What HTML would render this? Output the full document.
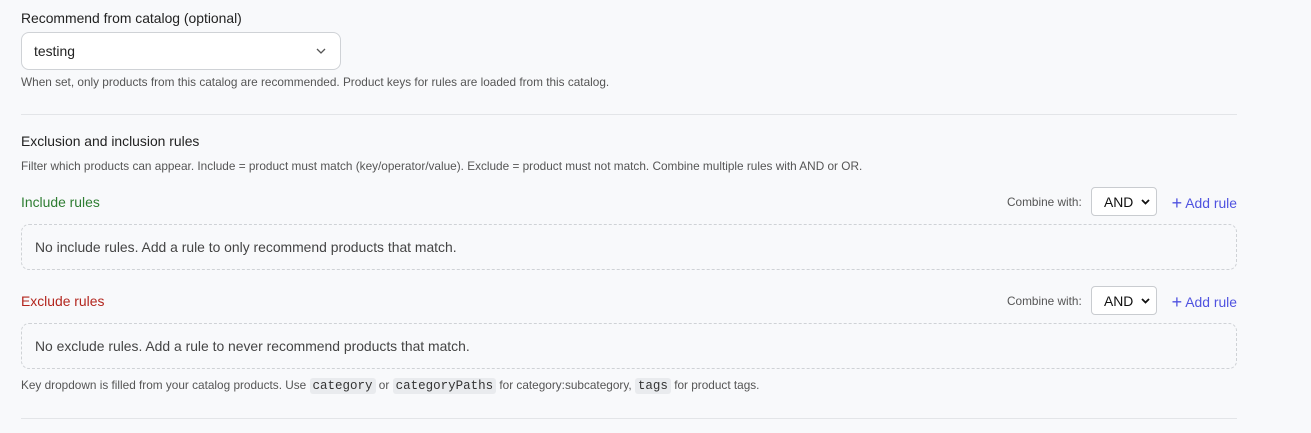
<!DOCTYPE html>
<html><head><style>
*{box-sizing:border-box;margin:0;padding:0}
body{width:1311px;height:433px;background:#f8f9fb;font-family:"Liberation Sans",sans-serif;color:#222;position:relative;overflow:hidden}
.a{position:absolute;white-space:nowrap}
.lbl{font-size:13.9px;color:#222}
.help{font-size:11.8px;color:#555}
.hr{position:absolute;left:21px;width:1216px;height:1px;background:#e3e5e8}
.box{position:absolute;left:21px;width:1216px;height:46px;border:1px dashed #cfd2d6;border-radius:8px;font-size:13.9px;color:#444;padding:14px 0 0 13px}
.sel{position:absolute;width:66px;height:29px;border:1px solid #c9ccd0;border-radius:4px;background:#fff;font-size:13.9px;color:#111;padding:6px 0 0 12px}
.sel svg{position:absolute;right:6px;top:11px}
.cw{font-size:11.8px;color:#555}
.add{font-size:13.9px;color:#4f52e0;right:74px}
code{font-family:"Liberation Mono",monospace;font-size:12.5px;background:#e9ebee;border-radius:3px;padding:1px 3px;color:#333}
</style></head><body>
<div class="a lbl" style="left:21px;top:10px">Recommend from catalog (optional)</div>
<div class="a" style="left:21px;top:32px;width:320px;height:38px;border:1px solid #cfd2d6;border-radius:8px;background:#fff;font-size:13.9px;padding:10px 0 0 12px">testing
<svg style="position:absolute;right:14px;top:15px" width="10" height="6" viewBox="0 0 10 6"><path d="M1 1l4 4 4-4" fill="none" stroke="#555" stroke-width="1.3"/></svg></div>
<div class="a help" style="left:21px;top:75px">When set, only products from this catalog are recommended. Product keys for rules are loaded from this catalog.</div>
<div class="hr" style="top:114px"></div>
<div class="a lbl" style="left:21px;top:133px">Exclusion and inclusion rules</div>
<div class="a help" style="left:21px;top:159px">Filter which products can appear. Include = product must match (key/operator/value). Exclude = product must not match. Combine multiple rules with AND or OR.</div>

<div class="a lbl" style="left:21px;top:194px;color:#2e7d32">Include rules</div>
<div class="a cw" style="left:1007px;top:195px">Combine with:</div>
<div class="sel" style="left:1091px;top:187px">AND<svg width="9" height="6" viewBox="0 0 9 6"><path d="M1 1l3.5 3.5L8 1" fill="none" stroke="#111" stroke-width="1.8"/></svg></div>
<div class="a add" style="top:192px"><span style="font-size:18px;position:relative;top:1px">+</span> Add rule</div>
<div class="box" style="top:224px">No include rules. Add a rule to only recommend products that match.</div>

<div class="a lbl" style="left:21px;top:293px;color:#b3261e">Exclude rules</div>
<div class="a cw" style="left:1007px;top:294px">Combine with:</div>
<div class="sel" style="left:1091px;top:286px">AND<svg width="9" height="6" viewBox="0 0 9 6"><path d="M1 1l3.5 3.5L8 1" fill="none" stroke="#111" stroke-width="1.8"/></svg></div>
<div class="a add" style="top:291px"><span style="font-size:18px;position:relative;top:1px">+</span> Add rule</div>
<div class="box" style="top:323px">No exclude rules. Add a rule to never recommend products that match.</div>

<div class="a help" style="left:21px;top:378px">Key dropdown is filled from your catalog products. Use <code>category</code> or <code>categoryPaths</code> for category:subcategory, <code>tags</code> for product tags.</div>
<div class="hr" style="top:418px"></div>
</body></html>
